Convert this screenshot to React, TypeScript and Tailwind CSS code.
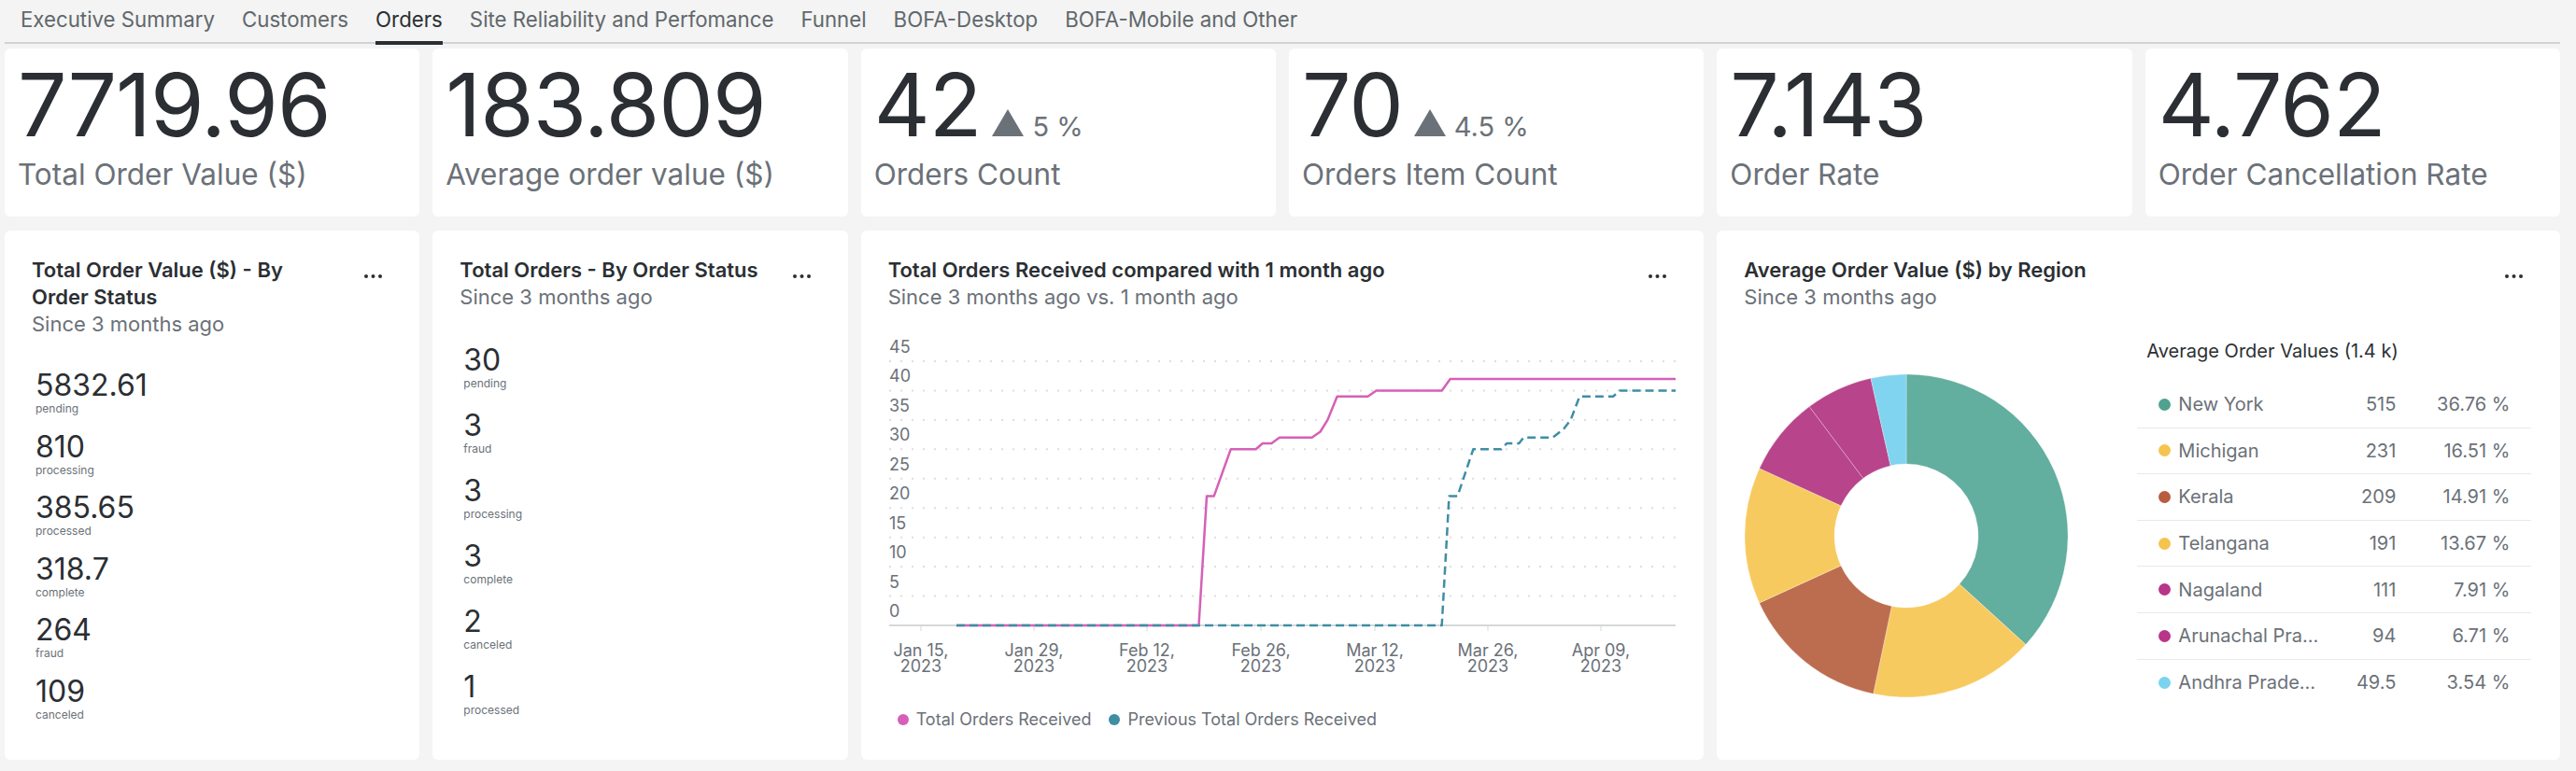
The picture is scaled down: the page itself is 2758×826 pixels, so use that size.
const tabs = [
  "Executive Summary",
  "Customers",
  "Orders",
  "Site Reliability and Perfomance",
  "Funnel",
  "BOFA-Desktop",
  "BOFA-Mobile and Other",
];

const kpis = [
  { value: "7719.96", label: "Total Order Value ($)" },
  { value: "183.809", label: "Average order value ($)" },
  { value: "42", label: "Orders Count", delta: "5 %" },
  { value: "70", label: "Orders Item Count", delta: "4.5 %" },
  { value: "7.143", label: "Order Rate" },
  { value: "4.762", label: "Order Cancellation Rate" },
];

const valueByStatus = [
  ["5832.61", "pending"],
  ["810", "processing"],
  ["385.65", "processed"],
  ["318.7", "complete"],
  ["264", "fraud"],
  ["109", "canceled"],
];

const ordersByStatus = [
  ["30", "pending"],
  ["3", "fraud"],
  ["3", "processing"],
  ["3", "complete"],
  ["2", "canceled"],
  ["1", "processed"],
];

const regions = [
  { name: "New York", value: "515", pct: "36.76 %", share: 36.76, color: "#62ae9f", dot: "#4fa28f" },
  { name: "Michigan", value: "231", pct: "16.51 %", share: 16.51, color: "#f7ca5f", dot: "#f5c44e" },
  { name: "Kerala", value: "209", pct: "14.91 %", share: 14.91, color: "#bd6d4f", dot: "#b85d3f" },
  { name: "Telangana", value: "191", pct: "13.67 %", share: 13.67, color: "#f7ca5f", dot: "#f5c44e" },
  { name: "Nagaland", value: "111", pct: "7.91 %", share: 7.91, color: "#b8448b", dot: "#b8358a" },
  { name: "Arunachal Pra...", value: "94", pct: "6.71 %", share: 6.71, color: "#b8448b", dot: "#b8358a" },
  { name: "Andhra Prade...", value: "49.5", pct: "3.54 %", share: 3.54, color: "#81d4ef", dot: "#7bd3f0" },
];

// chart data: [x, value]
const current: [number, number][] = [
  [72, 0], [331.5, 0], [340, 22], [347.7, 22], [365.7, 30], [392.6, 30], [399.8, 31], [409.4, 31],
  [417.8, 32], [452.6, 32], [461.6, 33], [469.4, 35], [479.6, 39], [512.5, 39], [521.5, 40],
  [591.7, 40], [600.7, 42], [842, 42],
];
const previous: [number, number][] = [
  [72, 0], [591.7, 0], [599.5, 22], [608.5, 22], [625.3, 30], [655.2, 30], [661.2, 31], [674.4, 31],
  [679.2, 32], [710.4, 32], [722.4, 33.5], [729.6, 35], [739.2, 39], [775.1, 39], [782.3, 40], [842, 40],
];

const yOf = (v: number) => 310 - v * (283 / 45);
const toPoints = (d: [number, number][]) => d.map(([x, v]) => `${x},${yOf(v).toFixed(1)}`).join(" ");

const xTicks = [
  { x: 34, label: "Jan 15," },
  { x: 155, label: "Jan 29," },
  { x: 276, label: "Feb 12," },
  { x: 398, label: "Feb 26," },
  { x: 520, label: "Mar 12," },
  { x: 641, label: "Mar 26," },
  { x: 762, label: "Apr 09," },
];

function arcPath(cx: number, cy: number, r0: number, r1: number, a0: number, a1: number) {
  const p = (r: number, a: number) => {
    const rad = (a * Math.PI) / 180;
    return `${(cx + r * Math.sin(rad)).toFixed(2)},${(cy - r * Math.cos(rad)).toFixed(2)}`;
  };
  const large = a1 - a0 > 180 ? 1 : 0;
  return `M${p(r1, a0)} A${r1},${r1} 0 ${large} 1 ${p(r1, a1)} L${p(r0, a1)} A${r0},${r0} 0 ${large} 0 ${p(r0, a0)} Z`;
}

const Dots = () => (
  <svg width="19" height="4" className="mt-[19px] ml-[30px] shrink-0">
    <circle cx="2" cy="2" r="2" fill="#2b2f33" />
    <circle cx="9.5" cy="2" r="2" fill="#2b2f33" />
    <circle cx="17" cy="2" r="2" fill="#2b2f33" />
  </svg>
);

const CardHeader = ({ title, subtitle }: { title: string; subtitle: string }) => (
  <div className="flex items-start pl-[29px] pr-[40px] pt-[28px]">
    <div className="flex-1 min-w-0">
      <div className="text-[22px] leading-[29px] font-semibold text-[#2b2f33]">{title}</div>
      <div className="text-[22px] leading-[29px] text-[#6b7178]">{subtitle}</div>
    </div>
    <Dots />
  </div>
);

const StatusList = ({ items, top, gap }: { items: string[][]; top: string; gap: string }) => (
  <div className={`flex flex-col pl-[33px] ${top} ${gap}`}>
    {items.map(([v, l], i) => (
      <div key={i}>
        <div className="text-[32px] leading-[32px] text-[#2b2f33]">{v}</div>
        <div className="mt-[2px] text-[12px] leading-[14px] text-[#6b7178]">{l}</div>
      </div>
    ))}
  </div>
);

const Donut = () => {
  let a = 0;
  return (
    <svg width="346" height="346" className="ml-[30px] mt-[68px] shrink-0">
      {regions.map((r) => {
        const a0 = a;
        a += (r.share / 100) * 360;
        return (
          <path
            key={r.name}
            d={arcPath(173, 173, 77, 173, a0, a)}
            fill={r.color}
            stroke="#ffffff"
            strokeOpacity="0.35"
            strokeWidth="0.8"
          />
        );
      })}
    </svg>
  );
};

const LineChart = () => (
  <svg width="842" height="370" className="ml-[30px] mt-[27px] block">
    {[45, 40, 35, 30, 25, 20, 15, 10, 5].map((v) => (
      <g key={v}>
        <line x1="0" x2="842" y1={yOf(v)} y2={yOf(v)} stroke="#dcdfe0" strokeWidth="2" strokeDasharray="2 10" />
        <text x="0" y={yOf(v) - 9} fontSize="18" fill="#6b7178">
          {v}
        </text>
      </g>
    ))}
    <text x="0" y={301} fontSize="18" fill="#6b7178">
      0
    </text>
    <line x1="0" x2="842" y1="310" y2="310" stroke="#d4d8da" strokeWidth="2" />
    {xTicks.map((t) => (
      <g key={t.label}>
        <line x1={t.x} x2={t.x} y1="311" y2="316" stroke="#d4d8da" strokeWidth="1" />
        <text x={t.x} y="343" fontSize="18" fill="#6b7178" textAnchor="middle">
          {t.label}
        </text>
        <text x={t.x} y="360" fontSize="18" fill="#6b7178" textAnchor="middle">
          2023
        </text>
      </g>
    ))}
    <polyline points={toPoints(current)} fill="none" stroke="#d660b7" strokeWidth="2.5" strokeLinejoin="round" />
    <polyline
      points={toPoints(previous)}
      fill="none"
      stroke="#3f8ea4"
      strokeWidth="2.5"
      strokeDasharray="9 5"
      strokeLinejoin="round"
    />
  </svg>
);

export default function App() {
  return (
    <div className="w-[2758px] h-[826px] bg-[#f3f4f3] pl-[5px] pr-[17px] font-['Inter',sans-serif] overflow-hidden">
      {/* Tabs */}
      <div className="flex items-end h-[47px] border-b-2 border-[#cfd4d6] pl-[17px] gap-[29px]">
        {tabs.map((t) => (
          <div
            key={t}
            className={`text-[22.25px] leading-[22px] pb-[12px] border-b-4 -mb-[3px] whitespace-nowrap ${
              t === "Orders" ? "border-[#2b2f33] text-[#2b2f33]" : "border-transparent text-[#62676c]"
            }`}
          >
            {t}
          </div>
        ))}
      </div>

      <div className="grid grid-cols-6 grid-rows-[180px_567px] gap-x-[14px] gap-y-[15px] mt-[5px]">
        {/* KPI cards */}
        {kpis.map((k) => (
          <div key={k.label} className="bg-white rounded-[6px] px-[14px] pt-[14px]">
            <div className="flex items-baseline">
              <span className="text-[93px] leading-[93px] tracking-[-1px] text-[#2b2f33]">{k.value}</span>
              {k.delta && (
                <>
                  <svg width="34" height="29" className="ml-[12px] mr-[9px]">
                    <polygon points="17,0 34,29 0,29" fill="#6b7178" />
                  </svg>
                  <span className="text-[29px] leading-[29px] text-[#6b7178]">{k.delta}</span>
                </>
              )}
            </div>
            <div className="mt-[12px] text-[31.5px] leading-[31.5px] text-[#6b7178] whitespace-nowrap">{k.label}</div>
          </div>
        ))}

        {/* Total order value by status */}
        <div className="bg-white rounded-[6px]">
          <CardHeader title="Total Order Value ($) - By Order Status" subtitle="Since 3 months ago" />
          <StatusList items={valueByStatus} top="mt-[35px]" gap="gap-[17.5px]" />
        </div>

        {/* Total orders by status */}
        <div className="bg-white rounded-[6px]">
          <CardHeader title="Total Orders - By Order Status" subtitle="Since 3 months ago" />
          <StatusList items={ordersByStatus} top="mt-[37px]" gap="gap-[22px]" />
        </div>

        {/* Line chart */}
        <div className="col-span-2 bg-white rounded-[6px]">
          <CardHeader
            title="Total Orders Received compared with 1 month ago"
            subtitle="Since 3 months ago vs. 1 month ago"
          />
          <LineChart />
          <div className="flex items-center mt-[32px] pl-[39px] text-[18px] leading-[18px] text-[#6b7178]">
            <span className="w-[12px] h-[12px] rounded-full bg-[#d660b7] mr-[8px]" />
            <span>Total Orders Received</span>
            <span className="w-[12px] h-[12px] rounded-full bg-[#3f8ea4] ml-[18px] mr-[9px]" />
            <span>Previous Total Orders Received</span>
          </div>
        </div>

        {/* Donut by region */}
        <div className="col-span-2 bg-white rounded-[6px]">
          <CardHeader title="Average Order Value ($) by Region" subtitle="Since 3 months ago" />
          <div className="flex items-start">
            <Donut />
            <div className="ml-[74px] mt-[33px] w-[422px]">
              <div className="pl-[10px] text-[20px] leading-[20px] text-[#2b2f33]">Average Order Values (1.4 k)</div>
              <div className="mt-[23px]">
                {regions.map((r, i) => (
                  <div
                    key={r.name}
                    className={`flex items-center h-[49.6px] text-[20px] leading-[20px] text-[#6b7178] ${
                      i < regions.length - 1 ? "border-b border-[#e8e9ea]" : ""
                    }`}
                  >
                    <span className="ml-[23px] w-[13px] h-[13px] rounded-full shrink-0" style={{ backgroundColor: r.dot }} />
                    <span className="ml-[8px] w-[170px] whitespace-nowrap">{r.name}</span>
                    <span className="w-[63px] text-right">{r.value}</span>
                    <span className="w-[122px] text-right">{r.pct}</span>
                  </div>
                ))}
              </div>
            </div>
          </div>
        </div>
      </div>
    </div>
  );
}
